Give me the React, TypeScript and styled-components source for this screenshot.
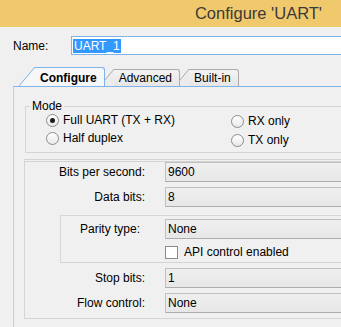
import React from 'react'
import styled, { createGlobalStyle } from 'styled-components'

const Global = createGlobalStyle`
    html, body {
        margin: 0;
        padding: 0;
        background: #f0f0f0;
        overflow: hidden;
    }
`

const App = () => {
    return (
        <Window>
            <Global />
            <TitleBar>Configure 'UART'</TitleBar>
            <NameRow>
                <NameLabel>Name:</NameLabel>
                <NameInput>
                    <Selected>UART_1</Selected>
                </NameInput>
            </NameRow>
            <TabRow>
                <Tab $active $z={3}>Configure</Tab>
                <Tab $z={2}>Advanced</Tab>
                <Tab $z={1}>Built-in</Tab>
            </TabRow>
            <Panel>
                <ModeGroup>
                    <Legend>Mode</Legend>
                    <RadioGrid>
                        <RadioItem><Radio $checked />Full UART (TX + RX)</RadioItem>
                        <RadioItem $shift={1}><Radio />RX only</RadioItem>
                        <RadioItem><Radio />Half duplex</RadioItem>
                        <RadioItem $shift={2}><Radio />TX only</RadioItem>
                    </RadioGrid>
                </ModeGroup>
                <FormBox>
                    <Row $label={120}>
                        <Label>Bits per second:</Label>
                        <Field>9600</Field>
                    </Row>
                    <Row $label={120}>
                        <Label>Data bits:</Label>
                        <Field>8</Field>
                    </Row>
                    <ParityGroup>
                        <Row $label={84}>
                            <Label $pad={5}>Parity type:</Label>
                            <Field>None</Field>
                        </Row>
                        <CheckRow $label={84}>
                            <span />
                            <CheckLabel><Check />API control enabled</CheckLabel>
                        </CheckRow>
                    </ParityGroup>
                    <Row $label={120}>
                        <Label>Stop bits:</Label>
                        <Field>1</Field>
                    </Row>
                    <Row $label={120}>
                        <Label>Flow control:</Label>
                        <Field>None</Field>
                    </Row>
                </FormBox>
            </Panel>
        </Window>
    )
}

export default App

const activeLine = '#7eb4ea'
const idleLine = '#acacac'

const Window = styled.div`
    width: 341px;
    height: 327px;
    overflow: hidden;
    background: #f0f0f0;
    font-family: "Liberation Sans", Arial, sans-serif;
    font-size: 12px;
    color: #000;
`
const TitleBar = styled.div`
    height: 27px;
    background: #f1c96d;
    display: flex;
    justify-content: flex-end;
    align-items: center;
    padding-right: 19px;
    padding-bottom: 1px;
    box-sizing: border-box;
    font-size: 16.5px;
    color: #3a3a3a;
`
const NameRow = styled.div`
    display: flex;
    align-items: center;
    margin-top: 9px;
    margin-right: -40px;
`
const NameLabel = styled.div`
    width: 58px;
    padding-left: 13px;
`
const NameInput = styled.div`
    flex: 1;
    height: 19px;
    box-sizing: border-box;
    border: 1px solid #7eb4ea;
    background: #fff;
    display: flex;
    align-items: center;
    padding-left: 1px;
`
const Selected = styled.span`
    background: #3399ff;
    color: #fff;
    line-height: 14px;
    padding: 0 1px;
`
const TabRow = styled.div`
    display: flex;
    align-items: flex-end;
    margin-top: 12px;
    padding-left: 26px;
    height: 19px;
`
const Tab = styled.div<{ $active?: boolean, $z: number }>`
    position: relative;
    z-index: ${({ $z }) => $z};
    margin-left: 9px;
    height: ${({ $active }) => ($active ? 19 : 17)}px;
    box-sizing: border-box;
    padding: 0 7px 0 5px;
    display: flex;
    align-items: flex-end;
    line-height: 16px;
    font-weight: ${({ $active }) => ($active ? 700 : 400)};
    border-top: 1px solid ${({ $active }) => ($active ? activeLine : idleLine)};
    border-right: 1px solid ${({ $active }) => ($active ? activeLine : idleLine)};
    border-top-right-radius: 3px;
    background: ${({ $active }) => ($active ? '#f7f7f7' : 'linear-gradient(#f3f3f3, #e6e6e6)')};
    &::before {
        content: '';
        position: absolute;
        top: -1px;
        bottom: 0;
        left: ${({ $active }) => ($active ? -16 : -14)}px;
        width: ${({ $active }) => ($active ? 16 : 14)}px;
        background: linear-gradient(
            to bottom right,
            transparent calc(50% - 0.8px),
            ${({ $active }) => ($active ? activeLine : idleLine)} 50%,
            ${({ $active }) => ($active ? '#f7f7f7' : '#ececec')} calc(50% + 0.8px)
        );
    }
`
const Panel = styled.div`
    margin-left: 13px;
    margin-right: -40px;
    border-top: 1px solid #7eb4ea;
    border-left: 1px solid #cdcdcd;
    height: 260px;
    position: relative;
    z-index: 4;
    background: #f0f0f0;
`
const ModeGroup = styled.fieldset`
    margin: 12px 0 0 11px;
    padding: 0 0 5px 20px;
    border: 1px solid #d5d5d5;
    border-right: none;
`
const Legend = styled.legend`
    margin-left: -16px;
    padding: 0 2px;
    line-height: 14px;
`
const RadioGrid = styled.div`
    display: grid;
    grid-template-columns: 185px 1fr;
    grid-auto-rows: 18px;
    margin-top: -2px;
`
const RadioItem = styled.label<{ $shift?: number }>`
    display: flex;
    align-items: center;
    gap: 4px;
    transform: translateY(${({ $shift }) => $shift || 0}px);
`
const Radio = styled.span<{ $checked?: boolean }>`
    width: 13px;
    height: 13px;
    box-sizing: border-box;
    border-radius: 50%;
    border: 1px solid #8c8c8c;
    background: linear-gradient(#ffffff, #e8e8e8);
    display: flex;
    align-items: center;
    justify-content: center;
    &::after {
        content: '';
        width: 5px;
        height: 5px;
        border-radius: 50%;
        background: #1b1b1b;
        display: ${({ $checked }) => ($checked ? 'block' : 'none')};
    }
`
const FormBox = styled.div`
    margin: 6px 0 0 10px;
    border-top: 3px double #d3d3d3;
    border-left: 1px solid #d5d5d5;
    border-bottom: 1px solid #d5d5d5;
    padding: 0 0 5px 0;
    display: flex;
    flex-direction: column;
    gap: 5px;
`
const Row = styled.div<{ $label: number }>`
    display: grid;
    grid-template-columns: ${({ $label }) => $label}px 1fr;
    column-gap: 20px;
    align-items: center;
    height: 20px;
`
const Label = styled.div<{ $pad?: number }>`
    text-align: right;
    padding-right: ${({ $pad }) => $pad || 0}px;
`
const Field = styled.div`
    height: 20px;
    box-sizing: border-box;
    border: 1px solid #c0c0c0;
    border-bottom-color: #adadad;
    background: linear-gradient(#efefef, #e7e7e7);
    padding-left: 2px;
    line-height: 18px;
`
const ParityGroup = styled.div`
    margin: 3px 0 0 35px;
    border: 1px solid #d5d5d5;
    border-right: none;
    padding: 3px 0 4px 0;
    display: flex;
    flex-direction: column;
    gap: 6px;
`
const CheckRow = styled.div<{ $label: number }>`
    display: grid;
    grid-template-columns: ${({ $label }) => $label}px 1fr;
    column-gap: 20px;
    height: 13px;
    align-items: center;
`
const CheckLabel = styled.label`
    display: flex;
    align-items: center;
    gap: 6px;
`
const Check = styled.span`
    width: 13px;
    height: 13px;
    box-sizing: border-box;
    border: 1px solid #8a8a8a;
    background: #fff;
`
